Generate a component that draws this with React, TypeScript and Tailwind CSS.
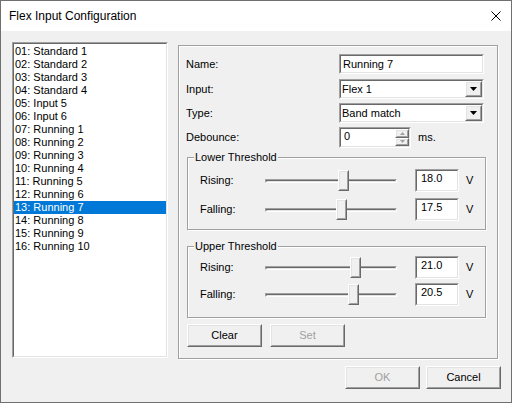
import React from 'react';

const items = [
  '01: Standard 1',
  '02: Standard 2',
  '03: Standard 3',
  '04: Standard 4',
  '05: Input 5',
  '06: Input 6',
  '07: Running 1',
  '08: Running 2',
  '09: Running 3',
  '10: Running 4',
  '11: Running 5',
  '12: Running 6',
  '13: Running 7',
  '14: Running 8',
  '15: Running 9',
  '16: Running 10',
];

type BoxProps = {
  className?: string;
  inner?: string;
  style?: React.CSSProperties;
  children?: React.ReactNode;
};

// classic sunken 3D edge (edit boxes, list box)
const Sunken: React.FC<BoxProps> = ({ className = '', inner = '', children }) => (
  <div className={`border border-t-[#a0a0a0] border-l-[#a0a0a0] border-r-white border-b-white ${className}`}>
    <div className={`h-full border border-t-[#696969] border-l-[#696969] border-r-[#e3e3e3] border-b-[#e3e3e3] bg-white ${inner}`}>
      {children}
    </div>
  </div>
);

// classic raised 3D edge (buttons, thumbs)
const Raised: React.FC<BoxProps> = ({ className = '', inner = '', style, children }) => (
  <div
    style={style}
    className={`border border-t-white border-l-white border-r-[#696969] border-b-[#696969] ${className}`}
  >
    <div className={`h-full border border-t-[#e3e3e3] border-l-[#e3e3e3] border-r-[#a0a0a0] border-b-[#a0a0a0] bg-[#f0f0f0] ${inner}`}>
      {children}
    </div>
  </div>
);

const Button = ({ label, disabled, className = '' }: { label: string; disabled?: boolean; className?: string }) => (
  <Raised className={`w-[75px] h-[23px] ${className}`} inner="flex items-center justify-center">
    <span className={disabled ? 'text-[#a0a0a0]' : 'text-black'}>{label}</span>
  </Raised>
);

const Combo = ({ value }: { value: string }) => (
  <Sunken className="w-[145px] h-[20px]" inner="flex items-center">
    <span className="flex-1 pl-px leading-[16px]">{value}</span>
    <Raised className="w-[17px] h-full" inner="flex items-center justify-center">
      <svg width="7" height="4" viewBox="0 0 7 4">
        <polygon points="0,0 7,0 3.5,4" fill="#000" />
      </svg>
    </Raised>
  </Sunken>
);

const Slider = ({ value }: { value: number }) => (
  <div className="relative w-[132px] h-[23px] flex items-center">
    <div className="w-full h-[4px] border border-t-[#a0a0a0] border-l-[#a0a0a0] border-r-white border-b-white">
      <div className="h-full border border-t-[#696969] border-l-[#696969] border-r-[#e3e3e3] border-b-[#e3e3e3]" />
    </div>
    <Raised className="absolute top-[1px] w-[11px] h-[21px]" style={{ left: 1 + value * 4 }} />
  </div>
);

const ThresholdRow = ({ label, value, className = '' }: { label: string; value: number; className?: string }) => (
  <div className={`flex items-center h-[23px] ${className}`}>
    <span className="w-[65px]">{label}</span>
    <Slider value={value} />
    <Sunken className="ml-[18px] w-[44px] h-[23px]" inner="pl-[4px] leading-[15px]">
      {value.toFixed(1)}
    </Sunken>
    <span className="ml-[7px]">V</span>
  </div>
);

const Group = ({
  title,
  className = '',
  children,
}: {
  title: string;
  className?: string;
  children: React.ReactNode;
}) => (
  <div
    className={`relative w-[299px] border border-[#a0a0a0] shadow-[inset_1px_1px_0_#fff,1px_1px_0_#fff] pl-[12px] ${className}`}
  >
    <span className="absolute left-[6px] -top-[7px] leading-[13px] px-px bg-[#f0f0f0]">{title}</span>
    {children}
  </div>
);

const Spin = () => (
  <div className="w-[14px] h-full flex flex-col">
    <Raised className="flex-1" inner="flex items-center justify-center">
      <svg width="5" height="3" viewBox="0 0 5 3">
        <polygon points="2.5,0 5,3 0,3" fill="#a0a0a0" />
      </svg>
    </Raised>
    <Raised className="flex-1" inner="flex items-center justify-center">
      <svg width="5" height="3" viewBox="0 0 5 3">
        <polygon points="0,0 5,0 2.5,3" fill="#a0a0a0" />
      </svg>
    </Raised>
  </div>
);

export default function App() {
  return (
    <div className="w-[512px] h-[403px] border border-[#707070] bg-[#f0f0f0] flex flex-col text-[11px] text-black font-['Liberation_Sans',Arial,sans-serif] overflow-hidden">
      {/* title bar */}
      <div className="h-[30px] shrink-0 bg-white flex items-center pl-2">
        <span className="flex-1 text-[12px]">Flex Input Configuration</span>
        <svg className="mr-[10px]" width="10" height="10" viewBox="0 0 10 10">
          <path d="M0.5 0.5L9.5 9.5M9.5 0.5L0.5 9.5" stroke="#000" strokeWidth="1" fill="none" />
        </svg>
      </div>

      <div className="flex pt-[11px] pl-[11px]">
        {/* inputs list */}
        <Sunken className="w-[156px] h-[316px] shrink-0" inner="pt-px">
          {items.map((it) => (
            <div
              key={it}
              className={`h-[13px] leading-[13px] pl-px ${it.startsWith('13:') ? 'bg-[#0078d7] text-white' : ''}`}
            >
              {it}
            </div>
          ))}
        </Sunken>

        {/* settings panel */}
        <div className="ml-[10px] mt-[3px] w-[320px] h-[314px] shrink-0 border border-[#a0a0a0] shadow-[inset_1px_1px_0_#fff,1px_1px_0_#fff] pt-[8px] pl-[7px]">
          <div className="flex items-center h-[20px]">
            <span className="w-[153px]">Name:</span>
            <Sunken className="w-[145px] h-[20px]" inner="pl-[2px] leading-[16px]">
              Running 7
            </Sunken>
          </div>
          <div className="flex items-center h-[20px] mt-[5px]">
            <span className="w-[153px]">Input:</span>
            <Combo value="Flex 1" />
          </div>
          <div className="flex items-center h-[20px] mt-[4px]">
            <span className="w-[153px]">Type:</span>
            <Combo value="Band match" />
          </div>
          <div className="flex items-center h-[21px] mt-[4px]">
            <span className="w-[153px]">Debounce:</span>
            <Sunken className="w-[72px] h-[21px]" inner="flex">
              <span className="flex-1 pl-[3px] leading-[15px]">0</span>
              <Spin />
            </Sunken>
            <span className="ml-[7px]">ms.</span>
          </div>

          <Group title="Lower Threshold" className="mt-[9px] ml-px pt-[11px] pb-[8px]">
            <ThresholdRow label="Rising:" value={18.0} />
            <ThresholdRow label="Falling:" value={17.5} className="mt-[6px]" />
          </Group>

          <Group title="Upper Threshold" className="mt-[16px] ml-px pt-[9px] pb-[11px]">
            <ThresholdRow label="Rising:" value={21.0} />
            <ThresholdRow label="Falling:" value={20.5} className="mt-[4px]" />
          </Group>

          <div className="flex gap-[8px] mt-[6px] ml-px">
            <Button label="Clear" />
            <Button label="Set" disabled />
          </div>
        </div>
      </div>

      <div className="flex justify-end gap-[6px] pr-[10px] mt-[7px]">
        <Button label="OK" disabled />
        <Button label="Cancel" />
      </div>
    </div>
  );
}
